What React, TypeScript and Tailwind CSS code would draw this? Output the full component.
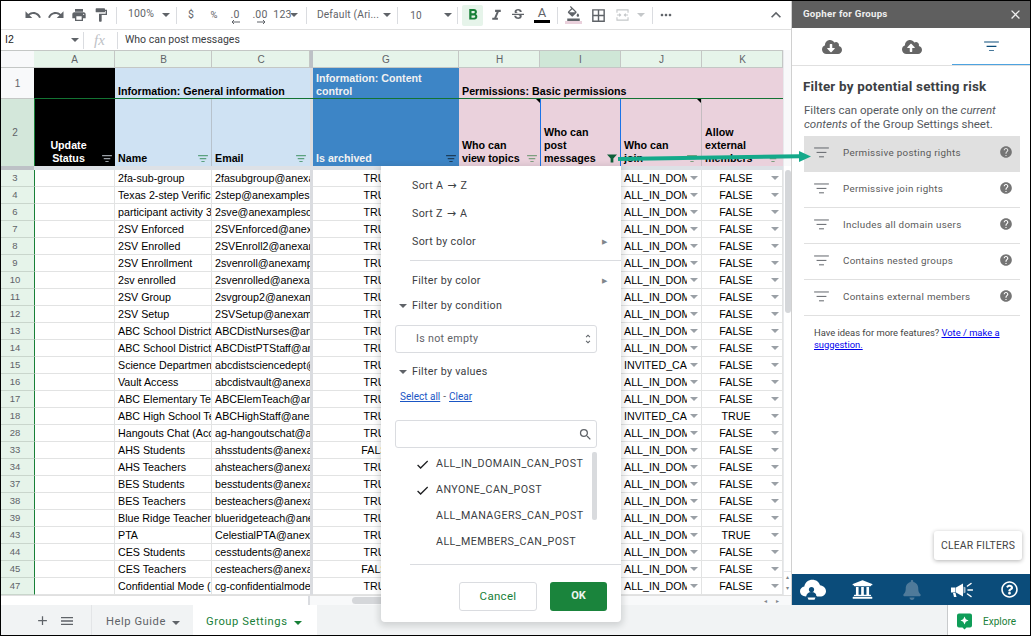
import React from "react";
import {
  MdUndo, MdRedo, MdPrint, MdFormatPaint, MdFormatBold, MdFormatItalic, MdStrikethroughS, MdFormatColorFill,
  MdBorderAll, MdMoreHoriz, MdKeyboardArrowUp, MdClose, MdHelp, MdAdd, MdMenu, MdSearch, MdCheck, MdUnfoldMore,
} from "react-icons/md";
import { FaCloudDownloadAlt, FaCloudUploadAlt, FaUniversity, FaBell, FaRegQuestionCircle } from "react-icons/fa";

const GRID = "grid grid-cols-[33px_81px_97px_98px_3px_146px_81px_81px_81px_81px]";

const ROWS: [string, string, string, string, string, string][] = [
  ["3", "2fa-sub-group", "2fasubgroup@anexamples.com", "TRUE", "ALL_IN_DOMAIN_CAN_JOIN", "FALSE"],
  ["4", "Texas 2-step Verification", "2step@anexamples.com", "TRUE", "ALL_IN_DOMAIN_CAN_JOIN", "FALSE"],
  ["6", "participant activity 3", "2sve@anexamplesof.com", "TRUE", "ALL_IN_DOMAIN_CAN_JOIN", "FALSE"],
  ["7", "2SV Enforced", "2SVEnforced@anexamples.com", "TRUE", "ALL_IN_DOMAIN_CAN_JOIN", "FALSE"],
  ["8", "2SV Enrolled", "2SVEnroll2@anexamples.com", "TRUE", "ALL_IN_DOMAIN_CAN_JOIN", "FALSE"],
  ["9", "2SV Enrollment", "2svenroll@anexamples.com", "TRUE", "ALL_IN_DOMAIN_CAN_JOIN", "FALSE"],
  ["10", "2sv enrolled", "2svenrolled@anexamples.com", "TRUE", "ALL_IN_DOMAIN_CAN_JOIN", "FALSE"],
  ["11", "2SV Group", "2svgroup2@anexamples.com", "TRUE", "ALL_IN_DOMAIN_CAN_JOIN", "FALSE"],
  ["12", "2SV Setup", "2SVSetup@anexamples.com", "TRUE", "ALL_IN_DOMAIN_CAN_JOIN", "FALSE"],
  ["13", "ABC School District Nurses", "ABCDistNurses@anexamples.com", "TRUE", "ALL_IN_DOMAIN_CAN_JOIN", "FALSE"],
  ["14", "ABC School District PT", "ABCDistPTStaff@anexamples.com", "TRUE", "ALL_IN_DOMAIN_CAN_JOIN", "FALSE"],
  ["15", "Science Department", "abcdistsciencedept@anex.com", "TRUE", "INVITED_CAN_JOIN", "FALSE"],
  ["16", "Vault Access", "abcdistvault@anexamples.com", "TRUE", "ALL_IN_DOMAIN_CAN_JOIN", "FALSE"],
  ["17", "ABC Elementary Teachers", "ABCElemTeach@anexamples.com", "TRUE", "ALL_IN_DOMAIN_CAN_JOIN", "FALSE"],
  ["18", "ABC High School Teachers", "ABCHighStaff@anexamples.com", "TRUE", "INVITED_CAN_JOIN", "TRUE"],
  ["28", "Hangouts Chat (Access)", "ag-hangoutschat@anexamples.com", "TRUE", "ALL_IN_DOMAIN_CAN_JOIN", "FALSE"],
  ["33", "AHS Students", "ahsstudents@anexamples.com", "FALSE", "ALL_IN_DOMAIN_CAN_JOIN", "FALSE"],
  ["34", "AHS Teachers", "ahsteachers@anexamples.com", "TRUE", "ALL_IN_DOMAIN_CAN_JOIN", "FALSE"],
  ["37", "BES Students", "besstudents@anexamples.com", "TRUE", "ALL_IN_DOMAIN_CAN_JOIN", "FALSE"],
  ["38", "BES Teachers", "besteachers@anexamples.com", "TRUE", "ALL_IN_DOMAIN_CAN_JOIN", "FALSE"],
  ["39", "Blue Ridge Teachers", "blueridgeteach@anexamples.com", "TRUE", "ALL_IN_DOMAIN_CAN_JOIN", "FALSE"],
  ["43", "PTA", "CelestialPTA@anexamples.com", "TRUE", "ALL_IN_DOMAIN_CAN_JOIN", "TRUE"],
  ["44", "CES Students", "cesstudents@anexamples.com", "TRUE", "ALL_IN_DOMAIN_CAN_JOIN", "FALSE"],
  ["45", "CES Teachers", "cesteachers@anexamples.com", "FALSE", "ALL_IN_DOMAIN_CAN_JOIN", "FALSE"],
  ["47", "Confidential Mode (Beta)", "cg-confidentialmode@anexamples.com", "TRUE", "ALL_IN_DOMAIN_CAN_JOIN", "FALSE"],
];

const Caret = () => (
  <span className="inline-block w-0 h-0 border-x-[4px] border-t-[4px] border-x-transparent border-t-[#9aa0a6] shrink-0" />
);
const DarkCaret = () => (
  <span className="inline-block w-0 h-0 border-x-[4px] border-t-[4px] border-x-transparent border-t-[#5f6368] shrink-0" />
);

function Lines({ className, w = 10, sw = 2 }: { className: string; w?: number; sw?: number }) {
  return (
    <svg width={w} height={w * 0.72} viewBox="0 0 15 11" className={className} fill="none" stroke="currentColor" strokeWidth={sw}>
      <path d="M0 1h15M2.5 5.5h10M5 10h5" />
    </svg>
  );
}

const Div = () => <span className="w-px h-[17px] bg-[#dadce0] shrink-0" />;
const S = "flex items-center justify-center shrink-0 whitespace-nowrap";

function Toolbar() {
  return (
    <div className="h-[29px] shrink-0 border-b border-[#e0e0e0] flex items-center text-[#5f6368] font-['Roboto',sans-serif] text-[10.5px] tracking-[0.2px] bg-white pl-[21px]">
      <span className={`${S} w-[22px]`}><MdUndo className="text-[18px]" /></span>
      <span className={`${S} w-[23px]`}><MdRedo className="text-[18px]" /></span>
      <span className={`${S} w-[23px]`}><MdPrint className="text-[16px]" /></span>
      <span className={`${S} w-[22px]`}><MdFormatPaint className="text-[16px]" /></span>
      <span className={`${S} w-[8px]`}><Div /></span>
      <span className={`${S} w-[42px] -mt-[3px]`}>100%</span>
      <span className={`${S} w-[8px]`}><DarkCaret /></span>
      <span className={`${S} w-[12px]`}><Div /></span>
      <span className={`${S} w-[18px]`}>$</span>
      <span className={`${S} w-[28px] text-[9.5px]`}>%</span>
      <span className={`${S} w-[14px] relative -mt-[1px]`}>.0<svg width="8" height="4" viewBox="0 0 8 4" className="absolute left-[4px] top-[13px]"><path d="M0 2h8M0 2l2-2M0 2l2 2" stroke="#5f6368" fill="none" /></svg></span>
      <span className={`${S} ml-[3px] w-[30px] relative -mt-[1px]`}>.00<svg width="8" height="4" viewBox="0 0 8 4" className="absolute left-[12px] top-[13px]"><path d="M0 2h8M8 2l-2-2M8 2l-2 2" stroke="#5f6368" fill="none" /></svg></span>
      <span className={`${S} w-[15px] text-[10.5px]`}>123</span>
      <span className={`${S} w-[8px]`}><DarkCaret /></span>
      <span className={`${S} w-[16px]`}><Div /></span>
      <span className={`${S} w-[68px] text-[10.2px]`}>Default (Ari...</span>
      <span className={`${S} w-[10px]`}><DarkCaret /></span>
      <span className={`${S} w-[10px]`}><Div /></span>
      <span className={`${S} w-[28px] text-[10px]`}>10</span>
      <span className={`${S} ml-[11px] w-[14px]`}><DarkCaret /></span>
      <span className={`${S} w-[4px]`}><Div /></span>
      <span className="ml-[3px] w-[21px] h-[21px] rounded-[2px] bg-[#e6f4ea] text-[#188038] flex items-center justify-center shrink-0"><MdFormatBold className="text-[18px]" /></span>
      <span className={`${S} ml-[1px] w-[24px]`}><MdFormatItalic className="text-[17px]" /></span>
      <span className={`${S} w-[20px]`}><MdStrikethroughS className="text-[16px]" /></span>
      <span className={`${S} w-[28px] flex-col -mt-[2px]`}>
        <span className="text-[13px] leading-[15px]">A</span>
        <span className="w-[16px] h-[3px] bg-black" />
      </span>
      <span className={`${S} w-[2px]`}><Div /></span>
      <span className={`${S} w-[30px] flex-col -mt-[1px]`}>
        <MdFormatColorFill className="text-[15px]" />
        <span className="w-[17px] h-[3px] bg-[#ead1dc]" />
      </span>
      <span className={`${S} w-[20px]`}><MdBorderAll className="text-[17px]" /></span>
      <span className={`${S} w-[28px]`}>
        <svg width="13" height="12" viewBox="0 0 14 13" className="text-[#c4c7c9]" fill="none" stroke="currentColor" strokeWidth="1.2">
          <path d="M1 4V1h12v3M1 9v3h12V9M1 6.5h4M3.5 5l1.5 1.5L3.5 8M13 6.5H9M10.5 5L9 6.5 10.5 8" />
        </svg>
      </span>
      <span className={`${S} w-[10px]`}><span className="inline-block w-0 h-0 border-x-[4px] border-t-[4px] border-x-transparent border-t-[#c4c7c9]" /></span>
      <span className={`${S} w-[12px]`}><Div /></span>
      <span className={`${S} w-[16px]`}><MdMoreHoriz className="text-[16px]" /></span>
      <span className={`${S} ml-[92px] w-[20px]`}><MdKeyboardArrowUp className="text-[20px]" /></span>
    </div>
  );
}

function FormulaBar() {
  return (
    <div className="h-[20px] shrink-0 flex items-center bg-white text-[10.5px]">
      <span className="ml-[4px] w-[66px] font-['Liberation_Sans',sans-serif] text-[#222]">I2</span>
      <DarkCaret />
      <span className="ml-[4px] flex"><Div /></span>
      <span className="ml-[10px] w-[23px] font-['Liberation_Serif',serif] italic text-[15px] text-[#bdc1c6]">fx</span>
      <Div />
      <span className="ml-[7px] font-['Roboto',sans-serif] text-[#3c4043]">Who can post messages</span>
    </div>
  );
}

const HEAD = "flex items-center justify-center pl-[1px] text-[10px] text-[#5f6368] font-['Liberation_Sans',sans-serif] border-r border-t border-b border-[#c4c7c5]";

function ColHeaders() {
  return (
    <div className={`${GRID} h-[18px]`}>
      <div className="bg-[#f8f9fa] border-b border-b-[#c4c7c5] border-t border-t-[#c4c7c5]" />
      <div className={`${HEAD} bg-[#e6f4ea]`}>A</div>
      <div className={`${HEAD} bg-[#e6f4ea]`}>B</div>
      <div className={`${HEAD} bg-[#e6f4ea]`}>C</div>
      <div className="bg-[#bdc1c6]" />
      <div className={`${HEAD} bg-[#e6f4ea]`}>G</div>
      <div className={`${HEAD} bg-[#e6f4ea]`}>H</div>
      <div className={`${HEAD} bg-[#cfe7d7]`}>I</div>
      <div className={`${HEAD} bg-[#e6f4ea]`}>J</div>
      <div className={`${HEAD} bg-[#e6f4ea]`}>K</div>
    </div>
  );
}

const TH = "font-['Liberation_Sans',sans-serif] font-bold text-[10.7px] leading-[13px]";

function Row1() {
  return (
    <div className={`${GRID} h-[31px]`}>
      <div className="bg-[#f8f9fa] flex items-center justify-center text-[10px] text-[#5f6368] font-['Liberation_Sans',sans-serif] border-b border-[#c4c7c5]">1</div>
      <div className="bg-black border-b border-[#137333]" />
      <div className={`col-span-2 bg-[#cfe2f3] border-b border-[#137333] flex items-end pl-[3px] text-black ${TH}`}>Information: General information</div>
      <div className="bg-[#dadce0] border-b border-[#137333]" />
      <div className={`bg-[#3d85c6] border-b border-[#137333] pl-[3px] pt-[4px] pr-[30px] text-[#f1f1f1] ${TH}`}>Information: Content control</div>
      <div className={`col-span-4 bg-[#ead1dc] border-b border-[#137333] flex items-end pl-[3px] text-black ${TH}`}>Permissions: Basic permissions</div>
    </div>
  );
}

function Row2() {
  const H = `relative flex items-end pl-[3px] pb-[1px] text-black ${TH}`;
  return (
    <div className={`${GRID} h-[67px]`}>
      <div className="bg-[#d3e7da] flex items-center justify-center text-[10px] text-[#5f6368] font-['Liberation_Sans',sans-serif] pr-[5px]">2</div>
      <div className={`${H} bg-black !text-white justify-center text-center pr-[16px] border-l border-[#188038]`}>
        Update<br />Status
        <Lines className="absolute right-[3px] bottom-[4px] text-[#9aa0a6]" />
      </div>
      <div className={`${H} bg-[#cfe2f3] border-r border-[#b7c2cc]`}>Name<Lines className="absolute right-[3px] bottom-[4px] text-[#5ba17f]" /></div>
      <div className={`${H} bg-[#cfe2f3]`}>Email<Lines className="absolute right-[4px] bottom-[4px] text-[#5ba17f]" /></div>
      <div className="bg-[#dadce0]" />
      <div className={`${H} bg-[#3d85c6] !text-[#f1f1f1]`}>Is archived<Lines className="absolute right-[3px] bottom-[4px] text-[#1c3d5a]" /></div>
      <div className={`${H} bg-[#ead1dc]`}>
        <span>Who can<br />view topics</span>
        <Lines className="absolute right-[3px] bottom-[4px] text-[#7d9e7f]" />
        <span className="absolute top-0 right-0 w-0 h-0 border-l-[4px] border-b-[4px] border-l-transparent border-b-transparent border-r-[4px] border-r-black" />
      </div>
      <div className={`${H} bg-[#ead1dc] border-x border-[#1a73e8]`}>
        <span>Who can<br />post<br />messages</span>
        <svg width="10" height="9" viewBox="0 0 11 9" className="absolute right-[3px] bottom-[3px] text-[#0f5f38]" fill="currentColor"><path d="M0 0h11L7 4.5V9H4V4.5z" /></svg>
      </div>
      <div className={`${H} bg-[#ead1dc] border-r border-[#c4bcc0]`}>
        <span>Who can<br />join</span>
        <Lines className="absolute right-[4px] bottom-[4px] text-[#7d9e7f]" />
        <span className="absolute top-0 right-0 w-0 h-0 border-l-[4px] border-b-[4px] border-l-transparent border-b-transparent border-r-[4px] border-r-black" />
      </div>
      <div className={`${H} bg-[#ead1dc]`}>
        <span>Allow<br />external<br />members</span>
        <Lines className="absolute right-[5px] bottom-[4px] text-[#7d9e7f]" />
      </div>
    </div>
  );
}

function Freeze() {
  return (
    <div className={`${GRID} h-[4px]`}>
      <div className="bg-[#bdc1c6]" />
      <div className="col-span-9 bg-[#dde1e6]" />
    </div>
  );
}

const CELL = "border-b border-r border-[#e2e3e3] overflow-hidden whitespace-nowrap font-['Liberation_Sans',sans-serif] text-[10.7px] text-black h-[17px] leading-[16px]";

function DataRow({ r }: { r: [string, string, string, string, string, string] }) {
  const [n, name, email, arch, join, ext] = r;
  return (
    <div className={`${GRID} h-[17px]`}>
      <div className="bg-[#e6f4ea] border-b border-[#c9d6cc] flex items-center justify-center text-[9.5px] text-[#5f6368] font-['Liberation_Sans',sans-serif] pr-[5px] leading-none">{n}</div>
      <div className={`${CELL} border-l border-l-[#188038]`} />
      <div className={`${CELL} pl-[3px]`}>{name}</div>
      <div className={`${CELL} pl-[3px] !border-r-0`}>{email}</div>
      <div className="bg-[#dadce0]" />
      <div className={`${CELL} text-center pr-[15px]`}>{arch}</div>
      <div className={CELL} />
      <div className={CELL} />
      <div className={`${CELL} flex items-center`}>
        <span className="pl-[3px] w-[66px] overflow-hidden shrink-0">{join}</span>
        <span className="ml-[3px] flex"><Caret /></span>
      </div>
      <div className={`${CELL} flex items-center`}>
        <span className="w-[68px] text-center shrink-0">{ext}</span>
        <span className="ml-[1px] flex"><Caret /></span>
      </div>
    </div>
  );
}

const ARROW = "w-[12px] flex items-center justify-center text-[6px] leading-none text-[#80868b]";

function Sheet() {
  return (
    <div className="flex-1 flex flex-col min-h-0 bg-white relative">
      <div className="flex flex-1 min-h-0">
        <div className="w-[782px]">
          <ColHeaders />
          <Row1 />
          <Row2 />
          <Freeze />
          {ROWS.map((r) => <DataRow key={r[0]} r={r} />)}
        </div>
        <div className="flex-1 relative bg-white border-l border-[#e8eaed] flex flex-col">
          <div className="h-[116px] bg-[#f8f9fa]" />
          <div className="absolute left-[1px] top-[120px] w-[6px] h-[143px] rounded-[3px] bg-[#d5d7da]" />
          <div className="mt-auto flex flex-col items-center text-[6px] leading-[11px] text-[#80868b] border-t border-[#e8eaed] pb-[1px]">
            <span>▴</span><span>▾</span>
          </div>
        </div>
      </div>
      <div className="h-[10px] shrink-0 flex items-stretch bg-[#f8f9fa] border-t border-[#e0e0e0]">
        <div className="w-[309px] border-r-2 border-[#dadce0] bg-white" />
        <div className="w-[42px]" />
        <div className="w-[85px] h-[7px] rounded-[4px] bg-[#d5d7da] mt-[1px]" />
        <div className="ml-auto flex mr-[8px]">
          <span className={ARROW}>◂</span>
          <span className={ARROW}>▸</span>
        </div>
      </div>
    </div>
  );
}

const MENU = "flex items-center font-['Roboto',sans-serif] text-[10.7px] tracking-[0.3px] text-[#3c4043]";
const Arrow = () => <span className="font-['DejaVu_Sans',sans-serif] text-[11px] tracking-normal mx-[1px]">→</span>;

function ValueRow({ label, on }: { label: string; on?: boolean }) {
  return (
    <div className={`${MENU} h-[26px]`}>
      <span className="ml-[34px] w-[21px]">{on && <MdCheck className="text-[15px] text-[#202124]" />}</span>
      <span className="!tracking-[0.42px]">{label}</span>
    </div>
  );
}

function FilterMenu() {
  return (
    <div className="absolute left-[380px] top-[165px] w-[240px] h-[456px] bg-white rounded-b-[4px] shadow-[0_2px_6px_2px_rgba(60,64,67,0.18)] pt-[6px]">
      <div className={`${MENU} h-[28px] pl-[31px] gap-[3px]`}>Sort A<Arrow />Z</div>
      <div className={`${MENU} h-[28px] pl-[31px] gap-[3px]`}>Sort Z<Arrow />A</div>
      <div className={`${MENU} h-[28px] pl-[31px] justify-between pr-[14px]`}>Sort by color<span className="text-[7px] text-[#80868b]">▶</span></div>
      <div className="mt-[4px] ml-[29px] border-t border-[#dadce0]" />
      <div className={`${MENU} h-[28px] mt-[6px] pl-[31px] justify-between pr-[14px]`}>Filter by color<span className="text-[7px] text-[#80868b]">▶</span></div>
      <div className={`${MENU} h-[22px] pl-[18px] gap-[5px]`}><DarkCaret />Filter by condition</div>
      <div className={`${MENU} mt-[8px] ml-[14px] w-[202px] h-[28px] border border-[#dadce0] rounded-[3px] justify-between pl-[20px] pr-[2px] !text-[#5f6368]`}>Is not empty<MdUnfoldMore className="text-[12px]" /></div>
      <div className={`${MENU} h-[22px] mt-[8px] pl-[18px] gap-[5px]`}><DarkCaret />Filter by values</div>
      <div className={`${MENU} h-[16px] mt-[5px] pl-[19px] !text-[10px] !tracking-normal gap-[3px] !text-[#1a56c4]`}><span className="underline">Select all</span><span className="text-[#5f6368]">-</span><span className="underline">Clear</span></div>
      <div className="mt-[16px] ml-[14px] w-[202px] h-[28px] border border-[#dadce0] rounded-[3px] flex items-center justify-end pr-[3px] text-[#5f6368]"><MdSearch className="text-[15px]" /></div>
      <div className="relative mt-[3px] h-[104px]">
        <ValueRow label="ALL_IN_DOMAIN_CAN_POST" on />
        <ValueRow label="ANYONE_CAN_POST" on />
        <ValueRow label="ALL_MANAGERS_CAN_POST" />
        <ValueRow label="ALL_MEMBERS_CAN_POST" />
        <span className="absolute left-[211px] top-[1px] w-[5px] h-[68px] rounded-[2px] bg-[#d9dbde]" />
      </div>
      <div className="mt-[9px] ml-[29px] border-t border-[#dadce0]" />
      <div className="flex mt-[17px] ml-[78px] gap-[13px]">
        <button className="w-[78px] h-[29px] border border-[#dadce0] rounded-[3px] text-[11.5px] tracking-[0.3px] font-['Roboto',sans-serif] text-[#188038]">Cancel</button>
        <button className="w-[57px] h-[29px] rounded-[3px] bg-[#1a843c] text-[11px] font-bold font-['Roboto',sans-serif] text-[#eef5ee]">OK</button>
      </div>
    </div>
  );
}

function SideItem({ label, on }: { label: string; on?: boolean }) {
  return (
    <div className={`h-[36px] flex items-center border-b ${on ? "bg-[#e0e0e0] border-[#e0e0e0]" : "border-[#e0e0e0]"}`}>
      <Lines w={15} sw={1} className="ml-[10px] -mt-[2px] text-[#5f6368]" />
      <span className="ml-[14px] flex-1 font-['Roboto',sans-serif] text-[9.8px] tracking-[0.3px] text-[#5a5a5a]">{label}</span>
      <MdHelp className="mr-[7px] -mt-[3px] text-[14px] text-[#757575]" />
    </div>
  );
}

function GroupIcon() {
  return (
    <svg width="26" height="21" viewBox="0 0 26 21">
      <path d="M6 17.5C2.5 17.5 0 15.2 0 12.3 0 9.7 1.8 7.9 4.3 7.4 5 3.4 8.4 0.8 12.4 0.8c3.7 0 6.6 2.2 7.6 5.4 3.4.3 6 2.9 6 6 0 3-2.6 5.3-6 5.3z" fill="#fff" />
      <circle cx="11.5" cy="10.5" r="2.6" fill="#0b4c7a" />
      <path d="M6 18c.5-3.5 2.5-5 5.5-5s5 1.5 5.5 5z" fill="#0b4c7a" />
      <path d="M7.5 18.5h8l-1 2.2h-6z" fill="#fff" />
      <circle cx="18" cy="11" r="1.6" fill="#fff" />
      <rect x="16.4" y="13" width="3.2" height="4" fill="#fff" />
    </svg>
  );
}

function HornIcon() {
  return (
    <svg width="22" height="18" viewBox="0 0 22 18" fill="none">
      <path d="M0 6.5h4.5v5H0z" fill="#fff" />
      <path d="M5 6.5L12 2.5v13L5 11.5z" fill="#fff" />
      <path d="M2 12h2.5l1 4H3z" fill="#fff" />
      <path d="M12.5 5.5l2 1v5l-2 1z" fill="#a9bccb" />
      <path d="M16.5 5L20 2.5M17 9h4.5M16.5 13l3.5 2.5" stroke="#fff" strokeWidth="1.5" strokeLinecap="round" />
    </svg>
  );
}

function Sidebar() {
  return (
    <div className="w-[239px] shrink-0 flex flex-col bg-white border-l border-[#d0d0d0]">
      <div className="h-[27px] bg-[#5f5f5f] flex items-center justify-between pl-[11px] pr-[7px] text-[#f0f0f0] font-['Roboto',sans-serif] font-bold text-[9.7px] tracking-[0.25px]">
        Gopher for Groups<MdClose className="text-[15px]" />
      </div>
      <div className="h-[38px] flex border-b border-[#e0e0e0] text-[#5f6368]">
        <div className="w-[80px] flex items-center justify-center"><FaCloudDownloadAlt className="text-[20px] text-[#666]" /></div>
        <div className="w-[80px] flex items-center justify-center"><FaCloudUploadAlt className="text-[20px] text-[#666]" /></div>
        <div className="flex-1 flex items-center justify-center border-b border-[#4da3e0]"><Lines w={15} sw={1.2} className="text-[#0b4c7a]" /></div>
      </div>
      <div className="px-[11px] pt-[13px] font-['Roboto',sans-serif]">
        <h1 className="font-bold text-[13.4px] leading-[16px] text-[#3c4043] tracking-[0.23px]">Filter by potential setting risk</h1>
        <p className="mt-[8px] ml-[1px] text-[11.5px] leading-[14px] text-[#55595e]">Filters can operate only on the <i>current contents</i> of the Group Settings sheet.</p>
      </div>
      <div className="ml-[12px] mr-[10px] mt-[5px]">
        <SideItem label="Permissive posting rights" on />
        <SideItem label="Permissive join rights" />
        <SideItem label="Includes all domain users" />
        <SideItem label="Contains nested groups" />
        <SideItem label="Contains external members" />
      </div>
      <p className="ml-[22px] mr-[16px] mt-[11px] font-['Roboto',sans-serif] text-[9.4px] leading-[11.5px] text-[#444]">
        Have ideas for more features? <span className="text-[#0000ee] underline">Vote / make a suggestion.</span>
      </p>
      <div className="flex-1 flex items-end justify-end pr-[8px] pb-[14px]">
        <button className="w-[88px] h-[29px] rounded-[3px] bg-white shadow-[0_1px_4px_rgba(0,0,0,0.3)] font-['Roboto',sans-serif] text-[10.4px] tracking-[0.2px] text-[#444]">CLEAR FILTERS</button>
      </div>
      <div className="h-[31px] bg-[#0b4c7a] flex items-center text-white">
        <span className="w-[45px] pl-[8px] flex"><GroupIcon /></span>
        <span className="w-[50px] flex justify-center"><FaUniversity className="text-[21px]" /></span>
        <span className="w-[50px] flex justify-center"><FaBell className="text-[20px] text-[#4f7a9a]" /></span>
        <span className="w-[50px] flex justify-center"><HornIcon /></span>
        <span className="flex-1 flex justify-center pl-[2px]"><FaRegQuestionCircle className="text-[17px]" /></span>
      </div>
    </div>
  );
}

function Tabs() {
  return (
    <div className="h-[30px] shrink-0 flex bg-[#f1f3f4] font-['Roboto',sans-serif] text-[11.2px] tracking-[0.55px]">
      <div className="w-[90px] flex items-center text-[#5f6368] pt-[1px]">
        <MdAdd className="ml-[34px] text-[15px]" />
        <MdMenu className="ml-[9px] text-[16px]" />
      </div>
      <div className="w-[102px] flex items-center border-l border-[#e3e5e7] pl-[14px] gap-[6px] pt-[5px] text-[#5f6368]">Help Guide<DarkCaret /></div>
      <div className="w-[124px] flex items-center bg-white pl-[13px] gap-[7px] pt-[5px] text-[#188038]">Group Settings<span className="inline-block w-0 h-0 border-x-[4px] border-t-[4px] border-x-transparent border-t-[#188038]" /></div>
      <div className="flex-1" />
      <div className="w-[83px] bg-white border-l border-[#c8cacc] flex items-center pl-[9px] gap-[11px] pt-[2px] text-[10px] !tracking-normal text-[#188038]">
        <svg width="15" height="17" viewBox="0 0 15 17">
          <path d="M2 0.5h11a2 2 0 0 1 2 2v10a2 2 0 0 1-2 2h-3.5L7.5 16.5 5.5 14.5H2a2 2 0 0 1-2-2v-10a2 2 0 0 1 2-2z" fill="#0f9d58" />
          <path d="M7.5 3.5l1.3 2.7 2.7 1.3-2.7 1.3-1.3 2.7-1.3-2.7L3.5 7.5l2.7-1.3z" fill="#fff" />
        </svg>
        Explore
      </div>
    </div>
  );
}

export default function App() {
  return (
    <div className="relative w-[1031px] h-[636px] border border-black overflow-hidden bg-white flex flex-col">
      <div className="flex flex-1 min-h-0">
        <div className="w-[790px] flex flex-col shrink-0">
          <Toolbar />
          <FormulaBar />
          <Sheet />
        </div>
        <Sidebar />
      </div>
      <Tabs />
      <FilterMenu />
      <svg width="215" height="20" viewBox="0 0 215 20" className="absolute left-[616px] top-[146px]" fill="#14a98a">
        <path d="M1 10L183 7.2v4L1 14z" />
        <path d="M182 4L194 9.5 182 15z" />
      </svg>
    </div>
  );
}
